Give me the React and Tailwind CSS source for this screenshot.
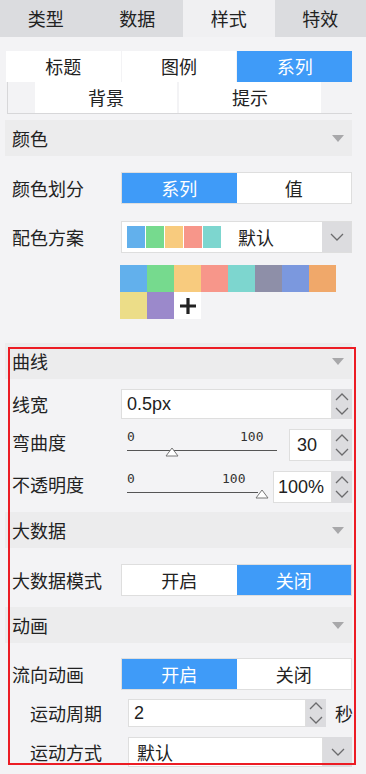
import React from 'react';

const BLUE = 'bg-[#3f9bf8] text-white';

function Caret() {
  return <span className="w-0 h-0 border-l-[6px] border-r-[6px] border-t-[7px] border-l-transparent border-r-transparent border-t-[#a8a8aa]" />;
}

function Header({ title, className = '' }) {
  return (
    <div className={`ml-[5px] w-[347px] h-[36px] bg-[#ececed] flex items-center justify-between pl-[7px] pr-[8px] ${className}`}>
      <span className="text-[18px] text-[#222]">{title}</span>
      <Caret />
    </div>
  );
}

function Chevron({ up, className = '' }) {
  return (
    <svg width="14" height="8" viewBox="0 0 14 8" className={className}>
      <path d={up ? 'M1 7 L7 1 L13 7' : 'M1 1 L7 7 L13 1'} fill="none" stroke="#6b6b6d" strokeWidth="1.3" />
    </svg>
  );
}

function Spinner() {
  return (
    <div className="w-[20px] h-full bg-[#dcdcdf] flex flex-col items-center justify-center gap-[6px]">
      <Chevron up />
      <Chevron />
    </div>
  );
}

function Toggle({ left, right, active }) {
  return (
    <div className="w-[231px] h-[32px] flex border border-[#dedede] bg-white text-[18px]">
      <div className={`flex-1 flex items-center justify-center ${active === 0 ? BLUE : 'text-[#222]'}`}>{left}</div>
      <div className={`flex-1 flex items-center justify-center ${active === 1 ? BLUE : 'text-[#222]'}`}>{right}</div>
    </div>
  );
}

function Row({ label, children, className = '', labelClass = 'w-[121px] pl-[12px]' }) {
  return (
    <div className={`flex items-center ${className}`}>
      <span className={`text-[18px] text-[#222] shrink-0 ${labelClass}`}>{label}</span>
      {children}
    </div>
  );
}

function Slider({ width, pct, maxAt }) {
  const thumb = (width * pct) / 100;
  return (
    <div className="relative h-[32px]" style={{ width: width + 8 }}>
      <span className="absolute left-0 top-[1px] text-[13px] leading-none font-['DejaVu_Sans_Mono',monospace] text-[#333]">0</span>
      <span className="absolute top-[1px] text-[13px] leading-none font-['DejaVu_Sans_Mono',monospace] text-[#333]" style={{ left: maxAt }}>100</span>
      <div className="absolute left-0 top-[21px] h-[1px] bg-[#555]" style={{ width: pct === 100 ? width - 4 : width }} />
      <svg width="14" height="10" viewBox="0 0 14 10" className="absolute top-[18px]" style={{ left: thumb - 7 }}>
        <path d="M7 1 L13 9 L1 9 Z" fill="white" stroke="#777" strokeWidth="1" />
      </svg>
    </div>
  );
}

const palette = ['#62b0ec', '#76da8e', '#f8cb7e', '#f7968a', '#7dd6cf', '#8e8fa8', '#7b98de', '#f0a86a', '#ecdd88', '#9b89cb'];

export default function App() {
  return (
    <div className="relative w-[366px] h-[774px] overflow-hidden bg-[#f3f3f5] font-['Noto_Sans_CJK_SC','Noto_Sans',sans-serif]">
      {/* top tabs */}
      <div className="flex h-[37px] bg-[#dbdcdf] text-[18px] text-[#222]">
        {['类型', '数据', '样式', '特效'].map((t, i) => (
          <div key={t} className={`flex-1 flex items-center justify-center ${i === 2 ? 'bg-[#f0f0f2]' : ''}`}>{t}</div>
        ))}
      </div>

      {/* sub tabs */}
      <div className="mt-[14px] ml-[6px] w-[346px] h-[31px] flex gap-[1px] text-[18px]">
        <div className="flex-1 bg-white flex items-center justify-center text-[#222]">标题</div>
        <div className="flex-1 bg-white flex items-center justify-center text-[#222]">图例</div>
        <div className={`flex-1 flex items-center justify-center ${BLUE}`}>系列</div>
      </div>
      <div className="ml-[7px] w-[345px] h-[32px] border-l border-b border-[#d7d7d9] flex gap-[2px] pl-[27px] text-[18px] text-[#222]">
        <div className="w-[142px] bg-white flex items-center justify-center">背景</div>
        <div className="w-[142px] bg-white flex items-center justify-center">提示</div>
      </div>

      <Header title="颜色" className="mt-[6px]" />

      <Row label="颜色划分" className="mt-[16px]">
        <Toggle left="系列" right="值" active={0} />
      </Row>

      <Row label="配色方案" className="mt-[17px]">
        <div className="w-[231px] h-[32px] flex border border-[#dedede] bg-white">
          <div className="flex-1 flex items-center pl-[5px] gap-[1px]">
            {palette.slice(0, 5).map((c) => (
              <span key={c} className="w-[18px] h-[22px]" style={{ background: c }} />
            ))}
            <span className="ml-[16px] text-[18px] text-[#222]">默认</span>
          </div>
          <div className="w-[29px] bg-[#dcdcdf] flex items-center justify-center">
            <Chevron />
          </div>
        </div>
      </Row>

      <div className="mt-[12px] ml-[120px] w-[216px] grid grid-cols-8">
        {palette.map((c) => (
          <span key={c} className="h-[27px]" style={{ background: c }} />
        ))}
        <span className="h-[27px] bg-white flex items-center justify-center">
          <svg width="18" height="18" viewBox="0 0 18 18">
            <path d="M9 1 V17 M1 9 H17" stroke="#222" strokeWidth="3.2" />
          </svg>
        </span>
      </div>

      <Header title="曲线" className="mt-[24px]" />

      <Row label="线宽" className="mt-[10px]">
        <div className="w-[231px] h-[30px] flex">
          <div className="flex-1 bg-white border border-[#dedede] flex items-center pl-[5px] text-[18px] font-['Liberation_Sans',sans-serif] text-[#222]">0.5px</div>
          <Spinner />
        </div>
      </Row>

      <Row label="弯曲度" className="mt-[10px] items-start">
        <div className="ml-[6px] w-[225px] flex justify-between">
          <Slider width={150} pct={30} maxAt={113} />
          <div className="w-[63px] h-[32px] flex">
            <div className="flex-1 bg-white border border-[#dedede] flex items-center pl-[7px] text-[18px] font-['Liberation_Sans',sans-serif] text-[#222]">30</div>
            <Spinner />
          </div>
        </div>
      </Row>

      <Row label="不透明度" className="mt-[10px] items-start">
        <div className="ml-[6px] w-[225px] flex justify-between">
          <Slider width={135} pct={100} maxAt={95} />
          <div className="w-[79px] h-[32px] flex">
            <div className="flex-1 bg-white border border-[#dedede] flex items-center pl-[4px] text-[18px] font-['Liberation_Sans',sans-serif] text-[#222]">100%</div>
            <Spinner />
          </div>
        </div>
      </Row>

      <Header title="大数据" className="mt-[9px]" />

      <Row label="大数据模式" className="mt-[16px]">
        <Toggle left="开启" right="关闭" active={1} />
      </Row>

      <Header title="动画" className="mt-[11px]" />

      <Row label="流向动画" className="mt-[15px]">
        <Toggle left="开启" right="关闭" active={0} />
      </Row>

      <Row label="运动周期" className="mt-[9px]" labelClass="w-[128px] pl-[30px]">
        <div className="w-[198px] h-[28px] flex">
          <div className="flex-1 bg-white border border-[#dedede] flex items-center pl-[5px] text-[18px] font-['Liberation_Sans',sans-serif] text-[#222]">2</div>
          <Spinner />
        </div>
        <span className="ml-[9px] text-[18px] text-[#222]">秒</span>
      </Row>

      <Row label="运动方式" className="mt-[10px]" labelClass="w-[128px] pl-[30px]">
        <div className="w-[224px] h-[30px] flex">
          <div className="flex-1 bg-white border border-[#dedede] flex items-center pl-[8px] text-[18px] text-[#222]">默认</div>
          <div className="w-[29px] bg-[#dcdcdf] flex items-center justify-center">
            <Chevron />
          </div>
        </div>
      </Row>

      {/* highlight overlay */}
      <div className="absolute left-[8px] top-[347px] w-[348px] h-[418px] border-2 border-[#ec1c24] pointer-events-none" />
    </div>
  );
}
